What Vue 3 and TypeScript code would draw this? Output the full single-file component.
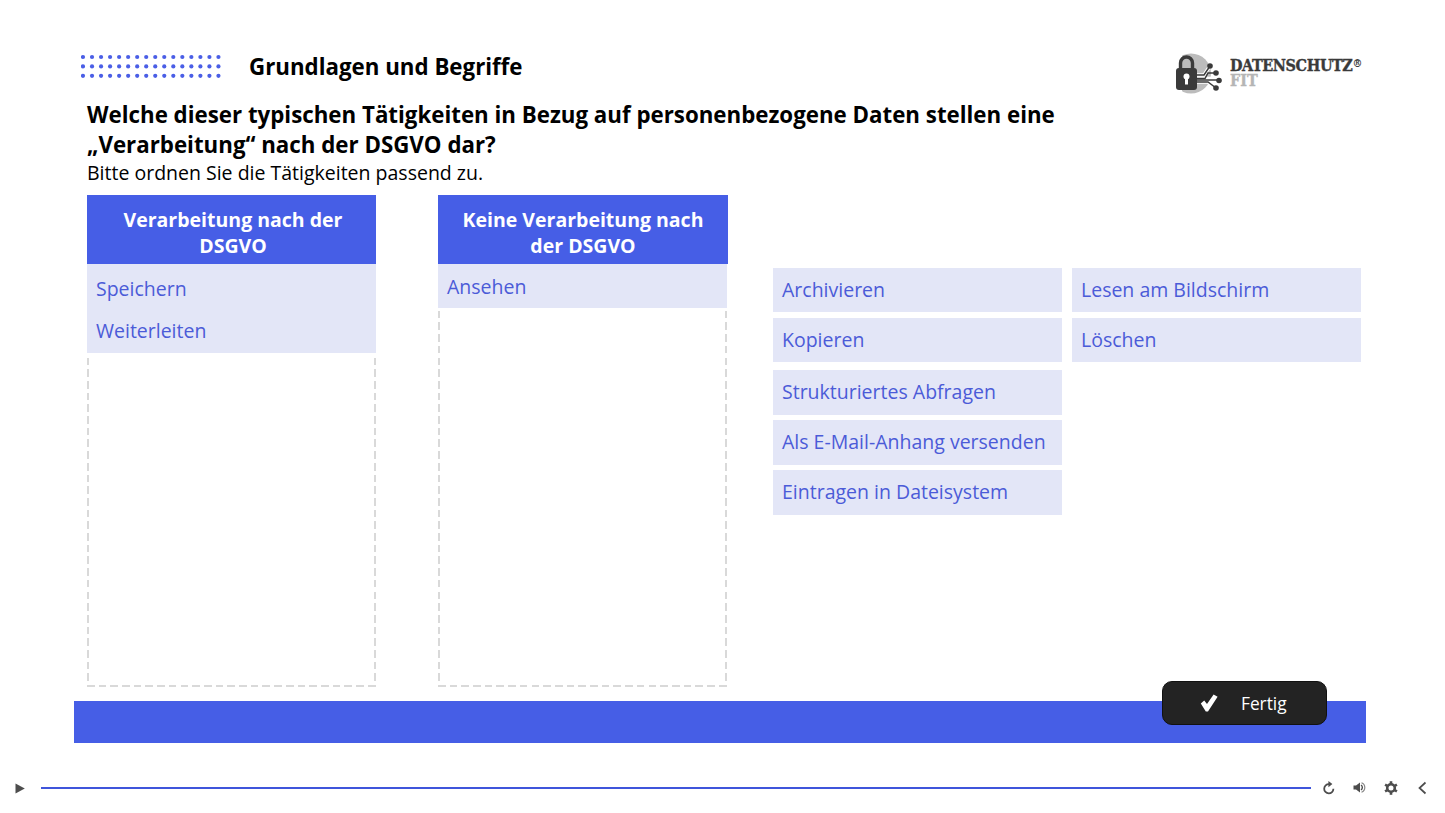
<script setup lang="ts">
const dotCols: number[] = Array.from({ length: 16 }, (_, i) => i)
const dotRows: number[] = [0, 1, 2]
const restItems: { label: string; cls: string }[] = [
  { label: 'Archivieren', cls: 'r1' },
  { label: 'Lesen am Bildschirm', cls: 'r1' },
  { label: 'Kopieren', cls: 'r2' },
  { label: 'Löschen', cls: 'r2' },
  { label: 'Strukturiertes Abfragen', cls: 'r3' },
  { label: 'Als E-Mail-Anhang versenden', cls: 'r4' },
  { label: 'Eintragen in Dateisystem', cls: 'r4' }
]
</script>

<template>
  <div class="page">
    <main class="slide">
      <header class="head">
        <svg class="dots" width="140" height="26" viewBox="0 0 140 26">
          <template v-for="r in dotRows" :key="r">
            <circle v-for="c in dotCols" :key="c" :cx="2 + c * 9.03" :cy="3 + r * 9.4" r="2.1" fill="#4a5ee6" />
          </template>
        </svg>
        <h1 class="topic">Grundlagen und Begriffe</h1>
        <div class="logo">
          <svg width="48" height="41" viewBox="0 0 48 41">
            <clipPath id="logoDisc"><rect x="7" y="0" width="41" height="41" /></clipPath>
            <circle cx="16" cy="20.5" r="20" fill="#bcbcbc" clip-path="url(#logoDisc)" />
            <path d="M5.5 16 V10 A6 6 0 0 1 17.5 10 V16" fill="none" stroke="#3a3a3a" stroke-width="3.4" />
            <rect x="1" y="15" width="21" height="22" rx="3" fill="#3a3a3a" />
            <circle cx="11.5" cy="23.5" r="3" fill="#fff" />
            <rect x="10" y="24" width="3" height="7.5" fill="#fff" />
            <g fill="none" stroke="#fff" stroke-width="3.6">
              <path d="M22 22 H29 L35 13" />
              <path d="M22 25.5 H41" />
              <path d="M22 29 H33 L41 35" />
            </g>
            <g fill="none" stroke="#3a3a3a" stroke-width="1.5">
              <path d="M22 22 H29 L35 13" />
              <path d="M22 25.5 H30 L33 20 H41" />
              <path d="M22 27 H44" />
              <path d="M22 29 H33 L41 35" />
            </g>
            <g fill="#3a3a3a">
              <circle cx="35" cy="13" r="2.8" />
              <circle cx="41" cy="20" r="2.8" />
              <circle cx="44" cy="27.5" r="2.8" />
              <circle cx="41" cy="35" r="2.8" />
            </g>
          </svg>
          <div class="logo-text">
            <div class="logo-main">DATENSCHUTZ<sup>®</sup></div>
            <div class="logo-sub">FIT</div>
          </div>
        </div>
      </header>

      <section class="question">
        <h2>Welche dieser typischen Tätigkeiten in Bezug auf personenbezogene Daten stellen eine<br />„Verarbeitung“ nach der DSGVO dar?</h2>
        <p>Bitte ordnen Sie die Tätigkeiten passend zu.</p>
      </section>

      <section class="board">
        <div class="col">
          <div class="col-head">Verarbeitung nach der DSGVO</div>
          <div class="drop">
            <div class="list tight">
              <div class="item">Speichern</div>
              <div class="item">Weiterleiten</div>
            </div>
          </div>
        </div>
        <div class="col">
          <div class="col-head">Keine Verarbeitung nach der DSGVO</div>
          <div class="drop">
            <div class="list">
              <div class="item">Ansehen</div>
            </div>
          </div>
        </div>
        <div class="pool">
          <div v-for="it in restItems" :key="it.label" class="chip" :class="it.cls">{{ it.label }}</div>
        </div>
      </section>

      <footer class="bar">
        <button class="done" type="button">
          <svg width="18" height="18" viewBox="0 0 18 18"><path d="M0.8 9.5 L4.2 6.6 L7 10 L13.6 0.6 L17.6 2.8 L8 17.4 H5.8 Z" fill="#fff" /></svg>
          <span>Fertig</span>
        </button>
      </footer>
    </main>

    <nav class="player">
      <svg class="play" width="10" height="11" viewBox="0 0 10 11"><path d="M0.5 0.5 L9.8 5.5 L0.5 10.5 Z" fill="#4d4d4d" /></svg>
      <div class="track"></div>
      <div class="tools">
        <svg width="14" height="14" viewBox="0 0 14 14"><path d="M11.4 7.8 A4.6 4.6 0 1 1 7 3.2" fill="none" stroke="#4d4d4d" stroke-width="1.8" /><path d="M6.4 0 L10.4 3.1 L6.4 6.2 Z" fill="#4d4d4d" /></svg>
        <svg width="14" height="14" viewBox="0 0 14 14"><path d="M0.5 4.6 H3 L7 1.6 V11.4 L3 8.6 H0.5 Z" fill="#4d4d4d" /><path d="M8.5 1.8 A5 5 0 0 1 8.5 11.2" fill="none" stroke="#888" stroke-width="1.2" /><path d="M8 4 A3 3 0 0 1 8 9" fill="none" stroke="#4d4d4d" stroke-width="1.4" /></svg>
        <svg width="14" height="14" viewBox="0 0 14 14"><circle cx="7" cy="7" r="3.8" fill="none" stroke="#4d4d4d" stroke-width="2.6" /><g stroke="#4d4d4d" stroke-width="2.6"><path d="M7 0.2 V3" /><path d="M7 11 V13.8" /><path d="M1.1 3.6 L3.5 5" /><path d="M10.5 9 L12.9 10.4" /><path d="M1.1 10.4 L3.5 9" /><path d="M10.5 5 L12.9 3.6" /></g></svg>
        <svg width="14" height="14" viewBox="0 0 14 14"><path d="M10.5 1.5 L4.5 7 L10.5 12.5" fill="none" stroke="#4d4d4d" stroke-width="1.7" /></svg>
      </div>
    </nav>
  </div>
</template>

<style>
html, body { margin: 0; background: #fff; overflow: hidden; }
</style>

<style scoped>
.page {
  width: 1445px;
  height: 813px;
  display: flex;
  flex-direction: column;
  font-family: "Open Sans", "Noto Sans", sans-serif;
  color: #000;
  background: #fff;
  overflow: hidden;
}
.slide {
  width: 1292px;
  margin-left: 74px;
  padding-top: 50px;
  box-sizing: border-box;
}
.head {
  height: 34px;
  display: flex;
  align-items: center;
  padding-left: 7px;
}
.dots { flex: none; }
.topic {
  margin: 0 0 0 28px;
  font-size: 22.3px;
  font-weight: 700;
  line-height: 34px;
}
.logo {
  margin-left: auto;
  margin-right: 4px;
  display: flex;
  align-items: flex-start;
  height: 34px;
  gap: 7px;
}
.logo svg { margin-top: 3px; flex: none; }
.logo-text {
  width: 132px;
  font-family: "DejaVu Serif Condensed", "DejaVu Serif", serif;
  font-weight: 700;
  line-height: 15px;
  padding-top: 8px;
}
.logo-main {
  font-size: 16px;
  color: #3a3a3a;
  letter-spacing: -0.4px;
  white-space: nowrap;
  -webkit-text-stroke: 0.35px #3a3a3a;
}
.logo-main sup {
  font-size: 11px;
  line-height: 0;
  vertical-align: 4px;
  letter-spacing: 0;
  -webkit-text-stroke: 0;
}
.logo-sub {
  font-size: 16px;
  color: #b5b5b5;
  -webkit-text-stroke: 0.35px #b5b5b5;
}
.question { margin: 16px 0 0 13px; }
.question h2 {
  margin: 0;
  font-size: 22.3px;
  font-weight: 700;
  line-height: 30px;
}
.question p {
  margin: 0;
  font-size: 19.5px;
  line-height: 26px;
  height: 35px;
}
.board {
  margin-left: 13px;
  height: 492px;
  display: flex;
  align-items: stretch;
}
.col {
  flex: none;
  width: 289px;
  display: flex;
  flex-direction: column;
  margin-right: 62px;
}
.col + .col { width: 290px; margin-right: 45px; }
.col-head {
  height: 69px;
  box-sizing: border-box;
  padding: 12px 22px 0 25px;
  background: #465ee6;
  color: #fff;
  font-size: 19.5px;
  font-weight: 700;
  line-height: 26px;
  text-align: center;
}
.col + .col .col-head { padding: 12px 23px 0 23px; }
.drop {
  flex: 1;
  background:
    repeating-linear-gradient(90deg, #d9d9d9 0 7.6px, transparent 7.6px 11.7px) left bottom / 100% 2px no-repeat,
    repeating-linear-gradient(180deg, #d9d9d9 0 7.6px, transparent 7.6px 11.7px) left top / 2px 100% no-repeat,
    repeating-linear-gradient(180deg, #d9d9d9 0 7.6px, transparent 7.6px 11.7px) right top / 2px 100% no-repeat;
}
.col + .col .drop { margin-right: 1px; }
.list { background: #e3e6f7; }
.list.tight { padding: 4px 0 1px; }
.item {
  height: 44px;
  box-sizing: border-box;
  padding: 1px 0 0 9px;
  color: #4b5bd8;
  font-size: 19.5px;
  line-height: 44px;
}
.list.tight .item { height: 42px; padding-top: 0; line-height: 42px; }
.pool {
  padding-top: 73px;
  display: grid;
  grid-template-columns: 289px 289px;
  grid-auto-rows: 44px;
  column-gap: 10px;
  row-gap: 6px;
  align-content: start;
}
.chip {
  box-sizing: border-box;
  height: 44px;
  padding-left: 9px;
  background: #e3e6f7;
  color: #4b5bd8;
  font-size: 19.5px;
  line-height: 44px;
  white-space: nowrap;
}
.r3, .r4 { grid-column: 1; height: 45px; margin-top: 2px; }
.bar {
  position: relative;
  margin-top: 14px;
  height: 42px;
  background: #465ee6;
}
.done {
  position: absolute;
  left: 1088px;
  top: -20px;
  width: 164.5px;
  height: 44px;
  box-sizing: border-box;
  padding: 0 0 0 37px;
  display: flex;
  align-items: center;
  gap: 23px;
  background: #232323;
  border: 1px solid #111;
  border-radius: 10px;
  color: #fff;
  font-family: inherit;
  font-size: 17.3px;
}
.player {
  margin-top: 35px;
  height: 20px;
  display: flex;
  align-items: center;
}
.play { margin-left: 15px; flex: none; }
.track {
  margin-left: 16px;
  width: 1270px;
  height: 2px;
  background: #3f55db;
}
.tools {
  margin-left: 11px;
  display: flex;
  gap: 17px;
}
</style>
